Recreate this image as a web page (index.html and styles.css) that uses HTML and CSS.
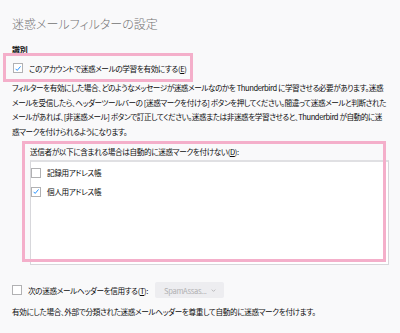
FILE: index.html
```html
<!DOCTYPE html>
<html lang="ja">
<head>
  <meta charset="UTF-8">
  <title>迷惑メールフィルターの設定</title>
  <link rel="stylesheet" href="styles.css">
</head>
<body>
  <div class="page">
    <h1 class="title">迷惑メールフィルターの設定</h1>

    <h2 class="section">識別</h2>
    <label class="check-row">
      <span class="box checked"><svg viewBox="0 0 10 10"><path d="M2 5.4 L4 7.4 L8.2 2.4" /></svg></span>
      <span>このアカウントで迷惑メールの学習を有効にする(<u>E</u>)</span>
    </label>

    <p class="desc">フィルターを有効にした場合、どのようなメッセージが迷惑メールなのかを Thunderbird に学習させる必要があります。迷惑メールを受信したら、ヘッダーツールバーの [迷惑マークを付ける] ボタンを押してください。間違って迷惑メールと判断されたメールがあれば、[非迷惑メール] ボタンで訂正してください。迷惑または非迷惑を学習させると、Thunderbird が自動的に迷惑マークを付けられるようになります。</p>

    <div class="whitelist">
      <div class="list-label">送信者が以下に含まれる場合は自動的に迷惑マークを付けない(<u>D</u>):</div>
      <div class="listbox">
        <label class="list-item">
          <span class="box"></span>
          <span>記録用アドレス帳</span>
        </label>
        <label class="list-item">
          <span class="box checked"><svg viewBox="0 0 10 10"><path d="M2 5.4 L4 7.4 L8.2 2.4" /></svg></span>
          <span>個人用アドレス帳</span>
        </label>
      </div>
    </div>

    <div class="header-row">
      <span class="box"></span>
      <span class="header-label">次の迷惑メールヘッダーを信用する(<u>T</u>):</span>
      <span class="select">SpamAssas... <svg viewBox="0 0 8 8"><path d="M2 3 L4 5 L6 3" /></svg></span>
    </div>

    <p class="note">有効にした場合、外部で分類された迷惑メールヘッダーを尊重して自動的に迷惑マークを付けます。</p>

    <!-- highlight frames -->
    <div class="mark mark-learn"></div>
    <div class="mark mark-list"></div>
  </div>
</body>
</html>
```

FILE: styles.css
```css
* {
  box-sizing: border-box;
}

body {
  margin: 0;
  background-color: #f9f9fa;
  font-family: "Noto Sans CJK JP", "Noto Sans", sans-serif;
  font-feature-settings: "palt";
  font-size: 7.6px;
  letter-spacing: -0.35px;
  color: #0c0c0d;
}

.page {
  position: relative;
  width: 400px;
  height: 333px;
  padding: 14px 11px 0 12px;
  overflow: hidden;
}

.title {
  margin: 0;
  font-size: 12px;
  line-height: 20px;
  font-weight: 300;
  letter-spacing: 0;
  color: #737373;
}

.section {
  margin: 10px 0 0;
  font-size: 8px;
  line-height: 12px;
  font-weight: bold;
}

.check-row {
  display: flex;
  align-items: center;
  gap: 6px;
  height: 14px;
  margin-top: 5px;
  padding-left: 1px;
}

.box {
  display: inline-flex;
  align-items: center;
  justify-content: center;
  flex: none;
  width: 10px;
  height: 10px;
  border: 1px solid #b1b1b3;
  background: #fff;
}

.box svg {
  width: 9px;
  height: 9px;
  fill: none;
  stroke: #0a84ff;
  stroke-width: 1.1;
}

.desc {
  margin: 6px 0 0;
  line-height: 14.5px;
  letter-spacing: -0.42px;
}

.whitelist {
  margin-top: 7px;
  padding-left: 18px;
}

.list-label {
  line-height: 12px;
  margin-bottom: 2px;
}

.listbox {
  height: 105px;
  background: #fff;
  border: 1px solid #d7d7db;
  border-top: 2px solid #e0e0e3;
  padding-top: 1px;
}

.list-item {
  display: flex;
  align-items: center;
  gap: 6px;
  height: 19px;
}

.header-row {
  display: flex;
  align-items: center;
  height: 16px;
  margin-top: 17px;
}

.header-label {
  margin-left: 6px;
}

.select {
  display: inline-flex;
  align-items: center;
  gap: 4px;
  height: 16px;
  margin-left: 7px;
  padding: 0 7px 0 9px;
  background: #ededf0;
  border-radius: 2px;
  color: #b1b1b3;
}

.select svg {
  width: 7px;
  height: 7px;
  fill: none;
  stroke: #b1b1b3;
  stroke-width: 1;
}

.note {
  margin: 8px 0 0;
  line-height: 12px;
}

.mark {
  position: absolute;
  border: 3px solid #f4afca;
}

.mark-learn {
  left: 3px;
  top: 53px;
  width: 190px;
  height: 29px;
}

.mark-list {
  left: 22px;
  top: 141px;
  width: 364px;
  height: 121px;
}
```
